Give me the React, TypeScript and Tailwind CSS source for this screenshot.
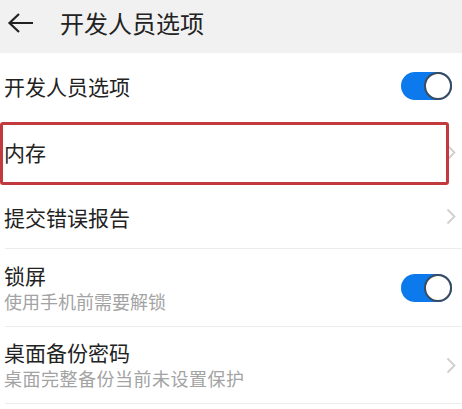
import React from "react";

const Toggle = () => (
  <div className="relative w-[51px] h-[28px] rounded-full bg-[#0c7aec] mr-[10px]">
    <div className="absolute right-0 top-0 w-[28px] h-[28px] rounded-full bg-white border-[2px] border-[#3b4b5e]" />
  </div>
);

const Chevron = () => (
  <svg width="10" height="17" viewBox="0 0 10 17" className="mr-[6px]">
    <path d="M1.5 1.5 L8.5 8.5 L1.5 15.5" fill="none" stroke="#cfcfcf" strokeWidth="1.8" />
  </svg>
);

export default function App() {
  return (
    <div
      className="w-[462px] h-[409px] bg-white text-[#222] overflow-hidden"
      style={{ fontFamily: '"Noto Sans CJK SC", "Noto Sans", sans-serif' }}
    >
      {/* Header */}
      <div className="h-[53px] bg-[#f1f1f1] flex items-center pb-[7px]">
        <svg width="28" height="22" viewBox="0 0 28 22" className="ml-[7px]">
          <path d="M26 11 H3 M12 2 L2.5 11 L12 20" fill="none" stroke="#222" strokeWidth="2.2" />
        </svg>
        <span className="ml-[25px] text-[24px] leading-[24px]">开发人员选项</span>
      </div>

      {/* 开发人员选项 */}
      <div className="h-[66px] flex items-center justify-between pl-[4px]">
        <span className="text-[21px] leading-[26px]">开发人员选项</span>
        <Toggle />
      </div>

      {/* 内存 */}
      <div className="relative h-[66px] flex items-center justify-between pl-[4px]">
        <span className="text-[21px] leading-[26px]">内存</span>
        <Chevron />
        <div className="absolute left-0 top-[3px] w-[449px] h-[63px] border-[3px] border-[#c23a3d] rounded-[3px]" />
      </div>

      {/* 提交错误报告 */}
      <div className="ml-[5px] h-[64px] flex items-center justify-between border-b border-[#ececec]">
        <span className="text-[21px] leading-[26px] -ml-[1px]">提交错误报告</span>
        <Chevron />
      </div>

      {/* 锁屏 */}
      <div className="ml-[5px] h-[78px] flex items-center justify-between border-b border-[#ececec]">
        <div className="-ml-[1px] flex flex-col">
          <span className="text-[21px] leading-[26px]">锁屏</span>
          <span className="text-[18px] leading-[26px] text-[#a3a3a3]">使用手机前需要解锁</span>
        </div>
        <Toggle />
      </div>

      {/* 桌面备份密码 */}
      <div className="ml-[5px] h-[77px] flex items-center justify-between border-b border-[#ececec]">
        <div className="-ml-[1px] flex flex-col">
          <span className="text-[21px] leading-[26px]">桌面备份密码</span>
          <span className="text-[18px] leading-[26px] text-[#a3a3a3] tracking-[0.5px]">桌面完整备份当前未设置保护</span>
        </div>
        <Chevron />
      </div>
    </div>
  );
}
